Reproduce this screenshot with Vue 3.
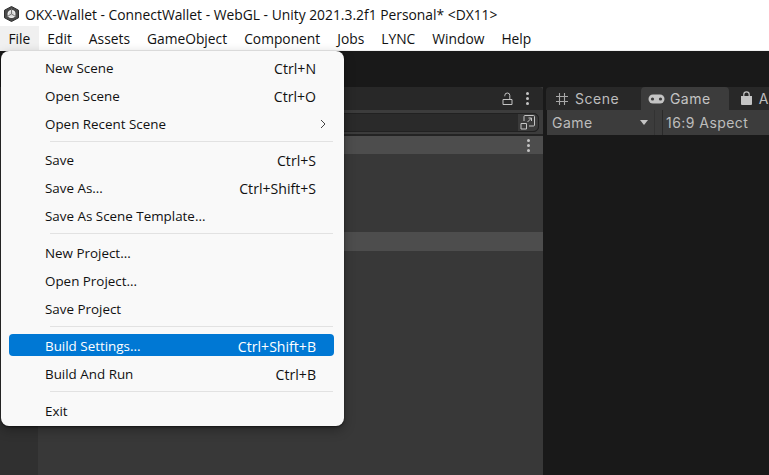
<script setup>
const menuBar = ['File','Edit','Assets','GameObject','Component','Jobs','LYNC','Window','Help']
const groups = [
  [{l:'New Scene',k:'Ctrl+N'},{l:'Open Scene',k:'Ctrl+O'},{l:'Open Recent Scene',sub:true}],
  [{l:'Save',k:'Ctrl+S'},{l:'Save As...',k:'Ctrl+Shift+S'},{l:'Save As Scene Template...'}],
  [{l:'New Project...'},{l:'Open Project...'},{l:'Save Project'}],
  [{l:'Build Settings...',k:'Ctrl+Shift+B',on:true},{l:'Build And Run',k:'Ctrl+B'}],
  [{l:'Exit'}],
]
</script>

<template>
  <div class="app">
    <div class="title">
      <svg class="logo" width="17" height="16" viewBox="0 0 17 16">
        <path d="M8.500 .5 15.500 4.200V11.800L8.500 15.500 1.500 11.800V4.200Z" fill="#4a4a4a" stroke="#2e2e2e" stroke-width="1"/>
        <circle cx="8.500" cy="8" r="3.400" fill="#d8d8d8" stroke="#f2f2f2" stroke-width="1.200"/>
        <path d="M8.500 8V2.600M8.500 8 3.800 10.800M8.500 8 13.200 10.800" stroke="#777" stroke-width="1"/>
      </svg>
      <span>OKX-Wallet - ConnectWallet - WebGL - Unity 2021.3.2f1 Personal* &lt;DX11&gt;</span>
    </div>
    <div class="menubar">
      <span v-for="(m,i) in menuBar" :key="m" class="mb" :class="{open:i===0}">{{ m }}</span>
    </div>
    <div class="work">
      <div class="left">
        <div class="strip"></div>
        <div class="hier">
          <div class="hhead">
            <svg width="11" height="13" viewBox="0 0 11 13"><path d="M1 7.500h9v5H1zM7.800 7.500V3.500a2.500 2.500 0 0 0-5 0v.8" fill="none" stroke="#c4c4c4" stroke-width="1"/></svg>
            <span class="dots"><i></i><i></i><i></i></span>
          </div>
          <div class="htool">
            <div class="search">
              <span class="sicon">
                <svg width="16" height="16" viewBox="0 0 16 16"><path d="M4 7V2.500A1 1 0 0 1 5 1.500h8.500a1 1 0 0 1 1 1V11a1 1 0 0 1-1 1H9M1 9.500h5.500V15H1zM7.500 8l4-4M8.500 4h3v3" fill="none" stroke="#c4c4c4" stroke-width="1"/></svg>
              </span>
            </div>
          </div>
          <div class="hrow first"><span class="dots"><i></i><i></i><i></i></span></div>
          <div class="hrow sel"></div>
        </div>
      </div>
      <div class="right">
        <div class="tabs">
          <div class="tab scene">
            <svg width="12" height="12" viewBox="0 0 12 12"><path d="M3.500 0v12M8.500 0v12M0 3.500h12M0 8.500h12" stroke="#a8a8a8" stroke-width="1.100"/></svg>
            <span>Scene</span>
          </div>
          <div class="tab game">
            <svg width="17" height="10" viewBox="0 0 17 10"><rect x=".5" y=".5" width="16" height="9" rx="4.500" fill="#c4c4c4"/><circle cx="4.500" cy="5" r="1.600" fill="#3c3c3c"/><circle cx="12.500" cy="5" r="1.600" fill="#3c3c3c"/></svg>
            <span>Game</span>
          </div>
          <div class="tab asset">
            <svg width="13" height="15" viewBox="0 0 13 15"><path d="M1 5h11v8a1 1 0 0 1-1 1H2a1 1 0 0 1-1-1Z" fill="#c4c4c4"/><path d="M3.800 5V3.500a2.700 2.700 0 0 1 5.400 0V5" fill="none" stroke="#c4c4c4" stroke-width="1.200"/></svg>
            <span>A</span>
          </div>
        </div>
        <div class="rtool">
          <div class="sel-game"><span>Game</span><i class="caret"></i></div>
          <div class="sep soft"></div>
          <div class="sep"></div>
          <div class="aspect">16:9 Aspect</div>
        </div>
      </div>
    </div>
    <div class="menu">
      <template v-for="(g,gi) in groups" :key="gi">
        <div v-if="gi" class="div" :class="{tight:gi===1}"></div>
        <div v-for="it in g" :key="it.l" class="item" :class="{on:it.on}">
          <span>{{ it.l }}</span>
          <span v-if="it.k" class="key">{{ it.k }}</span>
          <svg v-if="it.sub" class="chev" width="6" height="10" viewBox="0 0 6 10"><path d="M1 1l4 4-4 4" fill="none" stroke="#444" stroke-width="1"/></svg>
        </div>
      </template>
    </div>
  </div>
</template>

<style>
html, body { margin: 0; background: #191919; overflow: hidden; }
</style>

<style scoped>
.app { position: relative; width: 769px; height: 475px; overflow: hidden; display: flex; flex-direction: column; background: #191919; font-family: "Open Sans", "Noto Sans", sans-serif; }
.title { height: 26px; background: #fff; display: flex; align-items: center; gap: 5px; padding-left: 3px; font-size: 13.85px; color: #111; flex: none; box-sizing: border-box; padding-top: 2px; }
.logo { flex: none; }
.menubar { height: 25px; background: #fff; display: flex; flex: none; font-size: 13.8px; color: #111; border-bottom: 1px solid #f0f0f0; box-sizing: border-box; }
.mb { padding: 1px 8.5px 0; line-height: 24px; }
.mb.open { background: #f0f0f0; }
.work { flex: 1; display: flex; min-height: 0; padding-top: 36px; }
.left { width: 543px; display: flex; flex: none; }
.strip { width: 38px; background: #303030; flex: none; }
.hier { flex: 1; background: #383838; display: flex; flex-direction: column; }
.hhead { height: 23px; background: #282828; border-radius: 0 4px 0 0; display: flex; justify-content: flex-end; align-items: center; gap: 13px; padding-right: 14px; flex: none; }
.dots { display: flex; flex-direction: column; gap: 2px; align-items: center; width: 3px; }
.dots i { width: 3px; height: 3px; border-radius: 50%; background: #c4c4c4; display: block; }
.htool { height: 26px; background: #3c3c3c; flex: none; display: flex; align-items: center; box-sizing: border-box; border-bottom: 2px solid #232323; }
.search { flex: 1; height: 19px; margin-right: 4px; background: #2a2a2a; border-radius: 0 5px 5px 0; border: 1px solid #212121; display: flex; justify-content: flex-end; box-sizing: border-box; }
.sicon { width: 20px; background: #3a3a3a; border-radius: 0 5px 5px 0; display: flex; align-items: center; justify-content: center; }
.hrow { height: 18px; background: #4d4d4d; display: flex; justify-content: flex-end; align-items: center; padding-right: 13px; flex: none; }
.hrow.first { margin-bottom: 78px; }
.hrow.sel { height: 19px; }
.right { flex: 1; min-width: 0; display: flex; flex-direction: column; padding-left: 3px; }
.tabs { display: flex; height: 23px; flex: none; background: #282828; border-radius: 4px 0 0 0; }
.tab { display: flex; align-items: center; gap: 5px; color: #bdbdbd; font: 14px/1 Inter, Roboto, sans-serif; letter-spacing: .5px; }
.tab.scene { width: 96px; padding-left: 10px; box-sizing: border-box; gap: 7px; }
.tab.game { width: 89px; background: #3c3c3c; border-radius: 4px 4px 0 0; padding-left: 7px; box-sizing: border-box; color: #c4c4c4; }
.tab.asset { padding-left: 11px; gap: 6px; }
.rtool { height: 25px; background: #3c3c3c; flex: none; display: flex; align-items: center; color: #bdbdbd; font: 14px/1 Inter, Roboto, sans-serif; letter-spacing: .45px; margin-left: 1px; }
.sel-game { width: 107px; display: flex; justify-content: space-between; align-items: center; padding: 0 6px 0 5px; box-sizing: border-box; height: 100%; flex: none; }
.caret { width: 0; height: 0; border-left: 4px solid transparent; border-right: 4px solid transparent; border-top: 5px solid #c4c4c4; }
.sep { width: 1px; height: 100%; background: #2a2a2a; margin-left: 7px; flex: none; }
.sep.soft { background: #333; margin-left: 0; }
.aspect { padding-left: 3px; }
.menu { position: absolute; left: 1px; top: 51px; width: 343px; height: 375px; background: #f9f9f9; border-radius: 8px; box-shadow: 0 1px 2px rgba(0,0,0,.5), 0 4px 12px rgba(0,0,0,.3); padding: 3.6px 10px 0 8px; box-sizing: border-box; display: flex; flex-direction: column; font-size: 13.4px; color: #111; }
.item { height: 22px; margin: 1px 0 5px; padding: 3px 18px 0 36px; box-sizing: border-box; border-radius: 4px; display: flex; justify-content: space-between; align-items: center; flex: none; }
.key { font-size: 14.1px; }
.item.on { background: #0078d4; color: #fff; }
.chev { margin-left: auto; margin-right: -10px; }
.div { height: 1px; background: #e2e2e2; margin: 2px 1px 6px 41px; flex: none; }
.div.tight { margin-bottom: 5px; }
</style>
